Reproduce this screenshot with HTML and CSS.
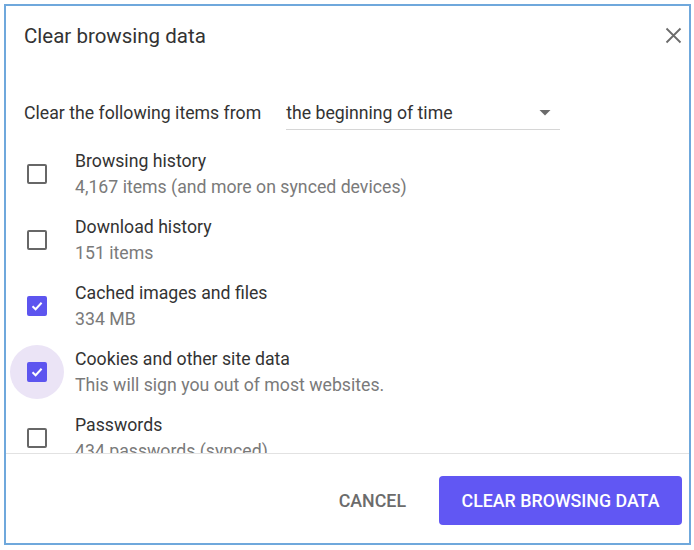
FILE: index.html
```html
<!DOCTYPE html>
<html>
<head>
<meta charset="utf-8">
<link rel="stylesheet" href="styles.css">
</head>
<body>
<div class="dialog">
  <div class="header">
    <div class="title">Clear browsing data</div>
    <button class="close" aria-label="Close">
      <svg width="17" height="17" viewBox="0 0 17 17"><path d="M1.5 1.5 L15.5 15.5 M15.5 1.5 L1.5 15.5" stroke="#6b6b6b" stroke-width="1.8" fill="none"/></svg>
    </button>
  </div>
  <div class="body">
    <div class="range">
      <span class="range-label">Clear the following items from</span>
      <div class="select">
        <span>the beginning of time</span>
        <svg width="12" height="6" viewBox="0 0 12 6"><path d="M0.5 0 L11.5 0 L6 5.5 Z" fill="#6b6b6b"/></svg>
      </div>
    </div>
    <div class="item">
      <div class="cb-wrap"><div class="cb"></div></div>
      <div class="text"><div class="t1">Browsing history</div><div class="t2">4,167 items (and more on synced devices)</div></div>
    </div>
    <div class="item">
      <div class="cb-wrap"><div class="cb"></div></div>
      <div class="text"><div class="t1">Download history</div><div class="t2">151 items</div></div>
    </div>
    <div class="item">
      <div class="cb-wrap"><div class="cb checked"><svg width="14" height="14" viewBox="0 0 14 14"><path d="M2.5 7.2 L5.6 10.2 L11.6 3.8" stroke="#fff" stroke-width="2" fill="none"/></svg></div></div>
      <div class="text"><div class="t1">Cached images and files</div><div class="t2">334 MB</div></div>
    </div>
    <div class="item">
      <div class="cb-wrap focus"><div class="cb checked"><svg width="14" height="14" viewBox="0 0 14 14"><path d="M2.5 7.2 L5.6 10.2 L11.6 3.8" stroke="#fff" stroke-width="2" fill="none"/></svg></div></div>
      <div class="text"><div class="t1">Cookies and other site data</div><div class="t2">This will sign you out of most websites.</div></div>
    </div>
    <div class="item">
      <div class="cb-wrap"><div class="cb"></div></div>
      <div class="text"><div class="t1">Passwords</div><div class="t2">434 passwords (synced)</div></div>
    </div>
    <div class="item">
      <div class="cb-wrap"><div class="cb"></div></div>
      <div class="text"><div class="t1">Autofill form data</div><div class="t2">12 addresses, 3 other suggestions (synced)</div></div>
    </div>
    <div class="item">
      <div class="cb-wrap"><div class="cb"></div></div>
      <div class="text"><div class="t1">Site settings</div><div class="t2">5 sites</div></div>
    </div>
    <div class="item">
      <div class="cb-wrap"><div class="cb"></div></div>
      <div class="text"><div class="t1">Hosted app data</div><div class="t2">2 apps (Gmail, Web Store)</div></div>
    </div>
  </div>
  <div class="footer">
    <button class="btn cancel">Cancel</button>
    <button class="btn primary">Clear browsing data</button>
  </div>
</div>
</body>
</html>
```
FILE: styles.css
```css
html, body {
  margin: 0;
  padding: 0;
  background: #fff;
}
body {
  font-family: Roboto, "Liberation Sans", Arial, sans-serif;
  color: #333;
}
.dialog {
  box-sizing: border-box;
  margin: 4px;
  width: 687px;
  height: 541px;
  border: 2px solid #6fa8dc;
  display: flex;
  flex-direction: column;
  background: #fff;
}
.header {
  height: 64px;
  flex: none;
  display: flex;
  align-items: center;
  justify-content: space-between;
  padding: 0 7px 0 18px;
}
.title {
  font-size: 20.5px;
  color: #333;
  margin-top: -4px;
}
.close {
  border: 0;
  background: none;
  padding: 0;
  width: 17px;
  height: 17px;
  margin-top: -6px;
  display: flex;
}
.body {
  flex: none;
  height: 383px;
  overflow-y: scroll;
  padding-left: 18px;
  border-bottom: 1px solid #e2e2e2;
}
.body::-webkit-scrollbar {
  width: 6px;
}
.body::-webkit-scrollbar-track {
  background: #f1f1f1;
}
.body::-webkit-scrollbar-thumb {
  background: #c1c1c1;
  border-left: 2px solid #f1f1f1;
}
.body::-webkit-scrollbar-button:vertical:start:decrement,
.body::-webkit-scrollbar-button:vertical:end:increment {
  display: block;
  height: 20px;
  background-color: #f1f1f1;
  background-image: linear-gradient(#555, #555);
  background-size: 2px 2px;
  background-repeat: no-repeat;
  background-position: 3px 12px;
}
.body::-webkit-scrollbar-button:vertical:end:increment {
  background-position: 3px 4px;
}
.range {
  display: flex;
  align-items: center;
  height: 34px;
  margin-top: 26px;
  margin-bottom: 11px;
  font-size: 17.7px;
}
.range-label {
  margin-right: 25px;
}
.select {
  box-sizing: border-box;
  width: 274px;
  height: 34px;
  display: flex;
  align-items: center;
  justify-content: space-between;
  border-bottom: 1px solid #d6d6d6;
  padding: 0 9px 0 0;
  color: #333;
}
.select svg {
  margin-top: 1px;
}
.item {
  display: flex;
  align-items: center;
  height: 66px;
}
.cb-wrap {
  position: relative;
  width: 20px;
  height: 20px;
  margin-left: 3px;
  margin-right: 28px;
  flex: none;
}
.cb-wrap.focus::before {
  content: "";
  position: absolute;
  left: -17px;
  top: -17px;
  width: 54px;
  height: 54px;
  border-radius: 50%;
  background: #ebe4f6;
}
.cb {
  position: relative;
  box-sizing: border-box;
  width: 20px;
  height: 20px;
  border: 2px solid #676767;
  border-radius: 2px;
  display: flex;
  align-items: center;
  justify-content: center;
}
.cb.checked {
  background: #5d55ef;
  border-color: #5d55ef;
}
.text {
  display: flex;
  flex-direction: column;
}
.t1 {
  font-size: 17.7px;
  line-height: 26px;
  color: #333;
}
.t2 {
  font-size: 17.7px;
  line-height: 27px;
  color: #7a7a7a;
}
.footer {
  flex: 1;
  display: flex;
  justify-content: flex-end;
  align-items: flex-start;
  padding: 22px 7px 0 0;
  gap: 17px;
}
.btn {
  font-family: Roboto, "Liberation Sans", Arial, sans-serif;
  font-size: 17.8px;
  font-weight: 500;
  text-transform: uppercase;
  border: 0;
  height: 49px;
  border-radius: 4px;
  cursor: pointer;
}
.cancel {
  background: none;
  color: #6b6b6b;
  padding: 0 16px;
}
.primary {
  background: #6157f3;
  color: #fff;
  width: 243px;
  padding: 0;
}
```
